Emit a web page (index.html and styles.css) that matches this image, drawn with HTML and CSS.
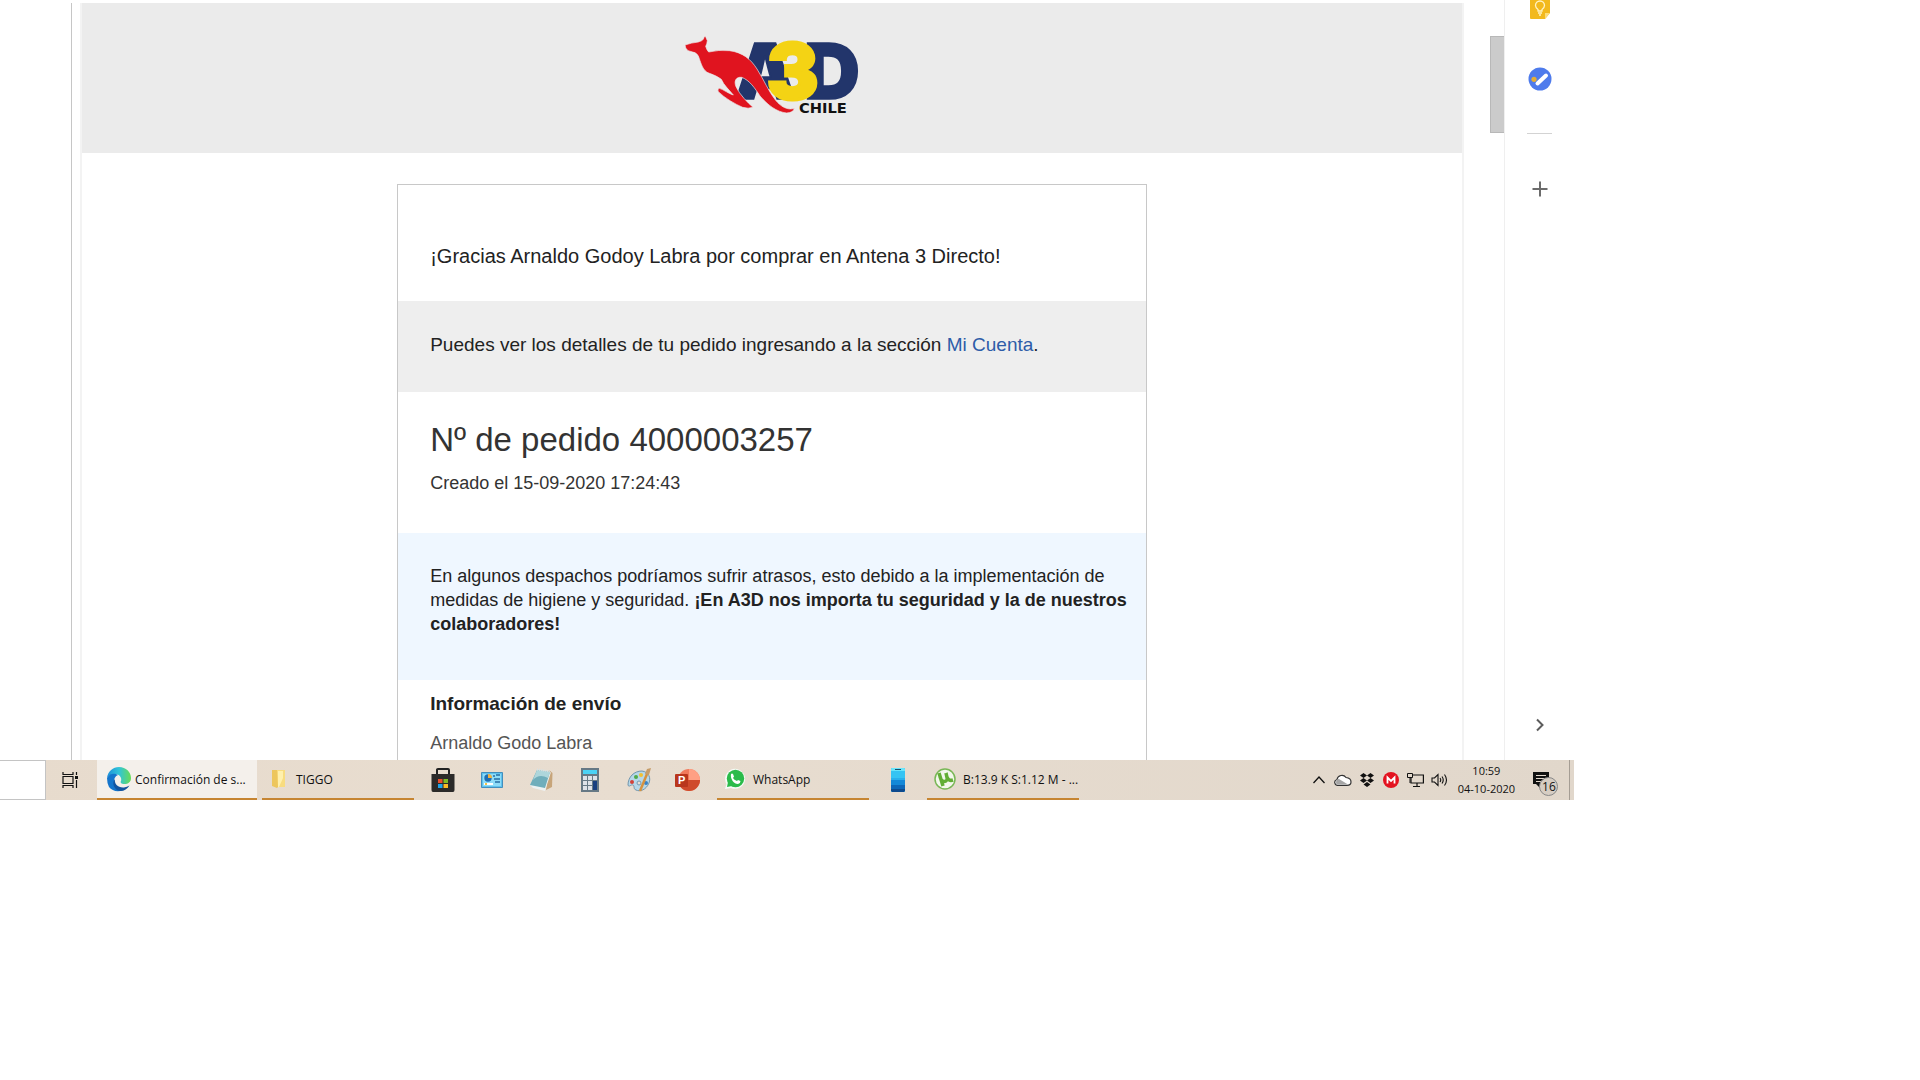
FILE: index.html
```
<!DOCTYPE html>
<html lang="es">
<head>
    <meta charset="UTF-8">
    <meta name="viewport" content="width=device-width, initial-scale=1.0">
    <title>Confirmación de su pedido</title>
    <link rel="stylesheet" href="styles.css">
</head>
<body>
    <div class="desktop">
        <div class="browser">
            <!-- Message -->
            <main class="message">
                <div class="email">
                    <header class="email-header">
                        <svg class="logo" viewBox="6 0 660 330" role="img" aria-label="A3D Chile">
                            <g class="logo-letters">
                                <text x="224" y="236">A</text>
                                <text x="432" y="236">D</text>
                                <text x="320" y="236" class="logo-three">3</text>
                            </g>
                            <path fill="#e0141f" stroke="#ececec" stroke-width="2" d="M75 75Q95 68 115 66Q126 63 130 58Q131 52 136 48L142 62Q141 72 137 79Q140 90 146 96Q175 89 208 92C248 97 272 117 291 147C312 180 326 215 347 241C362 259 382 272 403 265Q400 278 380 279C350 276 323 255 300 228C285 205 268 180 245 172C228 170 221 183 228 200C240 226 262 246 279 262Q265 267 248 262C225 252 195 235 175 215Q171 208 178 205C190 208 207 222 220 225C205 207 192 196 184 178C166 165 152 162 141 157C125 145 122 125 115 108Q109 97 98 96L84 92Q75 85 75 75Z"/>
                            <text x="417" y="280" class="logo-country">CHILE</text>
                        </svg>
                    </header>
                    <div class="card">
                        <section class="thanks">
                            <p>¡Gracias Arnaldo Godoy Labra por comprar en Antena 3 Directo!</p>
                        </section>
                        <section class="account">
                            <p>Puedes ver los detalles de tu pedido ingresando a la sección <a href="#">Mi Cuenta</a>.</p>
                        </section>
                        <section class="order">
                            <h1>Nº de pedido 4000003257</h1>
                            <p>Creado el 15-09-2020 17:24:43</p>
                        </section>
                        <section class="notice">
                            <p>En algunos despachos podríamos sufrir atrasos, esto debido a la implementación de medidas de higiene y seguridad. <strong>¡En A3D nos importa tu seguridad y la de nuestros colaboradores!</strong></p>
                        </section>
                        <section class="shipping">
                            <h2>Información de envío</h2>
                            <p>Arnaldo Godo Labra</p>
                        </section>
                    </div>
                </div>
            </main>
            <div class="scrollbar"><div class="thumb"></div></div>

            <!-- Side panel -->
            <aside class="side-panel">
                <button class="keep" aria-label="Keep">
                    <svg width="22" height="19" viewBox="0 0 22 19">
                        <path fill="#f2b91d" d="M1 0H21V13L16 19H2Q1 19 1 18Z"/>
                        <path fill="#fbdc7a" d="M21 13H16V19Z"/>
                        <path fill="none" stroke="#fff3c4" stroke-width="1.3" d="M9 11V9.500Q6.500 7.500 6.500 5.500A4.500 4.500 0 0 1 15.500 5.500Q15.500 7.500 13 9.500V11ZM9 13H13M10 15H12"/>
                    </svg>
                </button>
                <button class="tasks" aria-label="Tasks">
                    <svg width="24" height="24" viewBox="0 0 24 24">
                        <circle cx="12" cy="12" r="11.500" fill="#4e7bec"/>
                        <circle cx="6" cy="12.300" r="2.600" fill="#e5ae36"/>
                        <path stroke="#fff" stroke-width="4" stroke-linecap="round" d="M9.500 16.500L18 8.500"/>
                    </svg>
                </button>
                <hr>
                <button class="add" aria-label="Obtener complementos">
                    <svg width="16" height="16" viewBox="0 0 16 16"><path stroke="#6b6b6b" stroke-width="2" d="M8 .500V15.500M.500 8H15.500"/></svg>
                </button>
                <button class="collapse" aria-label="Ocultar panel">
                    <svg width="10" height="14" viewBox="0 0 10 14"><path fill="none" stroke="#5c5c5c" stroke-width="2" d="M2 1.500L7.500 7L2 12.500"/></svg>
                </button>
            </aside>
        </div>

        <!-- Taskbar -->
        <nav class="taskbar">
            <input class="search" type="text" aria-label="Buscar">
            <button class="task-view" aria-label="Vista de tareas">
                <svg width="18" height="18" viewBox="0 0 18 18" fill="none" stroke="#111" stroke-width="1.200">
                    <path d="M2 1V3.500H12V1M2 17V14.500H12V17M2 5.500H12V12.500H2ZM15.500 1V4M15.500 9V17"/>
                    <path fill="#111" stroke="none" d="M14 5H17V8H14Z"/>
                </svg>
            </button>
            <button class="app edge active">
                <svg width="26" height="26" viewBox="0 0 26 26">
                    <defs>
                        <linearGradient id="edgeTop" x1="0" x2="1"><stop offset="0" stop-color="#1c8fda"/><stop offset=".5" stop-color="#31c4d8"/><stop offset="1" stop-color="#68dc55"/></linearGradient>
                    </defs>
                    <path fill="url(#edgeTop)" d="M1 12C2 5 7 1 13 1C20 1 25 6 25 12C25 16 22 18 18.500 18C15 18 14 16.500 15 15C16 12 14 9 10 8C6 8 3 9 1 12Z"/>
                    <path fill="#1475cc" d="M1 12C3 8 8 6.500 12 9C9 10 8 13 8 15C8 20 12 24 17 24C12 26.500 6 25 3 21Q1 17 1 12Z"/>
                    <path fill="#1254a0" d="M9 13C8 18 12 22 18 21.500Q21 21 23.500 19.500C21 24 16 26 12 24.500C7 22 6 16 9 13Z"/>
                </svg>
                <span>Confirmación de s...</span>
            </button>
            <button class="app folder">
                <svg width="20" height="20" viewBox="0 0 20 20">
                    <path fill="#f8dc7f" d="M6 1H16V18H6Z"/>
                    <path fill="#edc65c" d="M3 1H8L9 18L8 19L3 17Z"/>
                    <path fill="#fff0ad" d="M9 2H14V9L10 18H9Z"/>
                </svg>
                <span>TIGGO</span>
            </button>
            <div class="pinned">
                <button aria-label="Microsoft Store">
                    <svg width="24" height="24" viewBox="0 0 24 24">
                        <path fill="none" stroke="#222" stroke-width="2" d="M6 7V1.500Q6 1 7 1H17Q18 1 18 2V7"/>
                        <path fill="#2b2a29" d="M.500 6H23.500V22Q23.500 24 22 24H2Q.500 24 .500 22Z"/>
                        <path fill="#e94f2d" d="M7 11H11.500V15H7Z"/><path fill="#80bb24" d="M12.500 11H17V15H12.500Z"/>
                        <path fill="#20a5ea" d="M7 16H11.500V20H7Z"/><path fill="#fcba25" d="M12.500 16H17V20H12.500Z"/>
                    </svg>
                </button>
                <button aria-label="Panel de control">
                    <svg width="24" height="24" viewBox="0 0 24 24">
                        <path fill="#5fc2ee" stroke="#438fbd" d="M1.500 4.500H22.500V19.500H1.500Z"/>
                        <path fill="#8edcf8" d="M3 6H21V18H3Z"/>
                        <circle cx="8" cy="10" r="3.700" fill="#1e6db2"/><path fill="#f2b343" d="M8 10V6A4 4 0 0 1 12 10Z"/>
                        <path stroke="#266da4" stroke-width="1.500" d="M13 8H15M16 7H20M14 11H20M15 14H20"/>
                        <path stroke="#fff" stroke-width="2" d="M4 16H13"/><path stroke="#f0c246" stroke-width="2" d="M5 16H7"/>
                    </svg>
                </button>
                <button aria-label="Bloc de notas">
                    <svg width="24" height="24" viewBox="0 0 24 24">
                        <path fill="#c7a57a" d="M20 2L23.500 5L23 19L17 22Z"/>
                        <path fill="#edf2f2" d="M1 17L4 20L16 23L22 4Z"/>
                        <path fill="#70aebb" d="M8 2L21 4L16 20L1 17Z"/>
                        <path fill="#aed6db" d="M8 2L21 4L19 10Q10 5 4 12Z"/>
                        <path stroke="#d5e2e5" stroke-width="2" stroke-dasharray="1 1" d="M8 1.500L21 3.500"/>
                    </svg>
                </button>
                <button aria-label="Calculadora">
                    <svg width="24" height="24" viewBox="0 0 24 24">
                        <path fill="#667985" d="M3 0H21V24H3Z"/><path fill="#4bd2f5" d="M5 2H19V6H5Z"/>
                        <path fill="#dde2e8" d="M5 8H9V12H5ZM10 8H14V12H10ZM15 8H19V12H15ZM5 13H9V17H5ZM10 13H14V17H10ZM5 18H9V22H5ZM10 18H14V22H10Z"/>
                        <path fill="#173f80" d="M15 13H19V22H15Z"/>
                    </svg>
                </button>
                <button aria-label="Paint">
                    <svg width="24" height="24" viewBox="0 0 24 24">
                        <path fill="#b6d8e9" stroke="#7196ad" d="M1 17C1 9 7 3 15 3C22 4 24 10 22 15C19 22 13 24 9 22C6 21 8 18 6 17C4 16 2 20 1 17Z"/>
                        <circle cx="12" cy="15" r="2" fill="#e9dfd3" stroke="#7299b2"/>
                        <circle cx="5" cy="14" r="2" fill="#d34238"/><circle cx="9" cy="9" r="2" fill="#4fab4a"/><circle cx="14" cy="7" r="2" fill="#f1c132"/><circle cx="19" cy="15" r="2" fill="#3982c5"/>
                        <path stroke="#d6923e" stroke-width="2.500" d="M13 23L20 6"/><path fill="#c69d69" d="M18 6L20 1L24 0L22 7Z"/>
                    </svg>
                </button>
                <button aria-label="PowerPoint">
                    <svg width="26" height="24" viewBox="0 0 26 24">
                        <circle cx="14" cy="12" r="11" fill="#f07a5b"/><path fill="#ffa084" d="M14 1A11 11 0 0 1 25 12H14Z"/><path fill="#cf4a2b" d="M3 12H25A11 11 0 0 1 3 12Z"/>
                        <rect y="6" width="13" height="13" rx="1" fill="#b9361c"/>
                        <text x="3" y="16" class="ppt-letter">P</text>
                    </svg>
                </button>
            </div>
            <button class="app whatsapp">
                <svg width="22" height="22" viewBox="0 0 22 22">
                    <path fill="#f7fbf7" d="M1 21L2.500 16A10 10 0 1 1 7 20Z"/>
                    <circle cx="11.500" cy="10.500" r="8.700" fill="#2bbb4a"/><path fill="#2bbb4a" d="M3 19L4 14L8 18Z"/>
                    <path fill="#fff" d="M7 6Q8 5 9 6L10 8.500L9 10Q10 12 13 13L14 12L16.500 13Q16.500 15.500 14 16C10 16 6 11 7 6Z"/>
                </svg>
                <span>WhatsApp</span>
            </button>
            <button class="phone" aria-label="Tu Teléfono">
                <svg width="14" height="24" viewBox="0 0 14 24">
                    <rect width="14" height="24" rx="1" fill="#35c4f3"/>
                    <path fill="#28b0ed" d="M0 10H14V17H0Z"/><path fill="#1488d8" d="M0 12H14V18H0Z"/><path fill="#0d66b8" d="M0 17H14V21H0Z"/><path fill="#0d4a8e" d="M0 21H14V23L13 24H1L0 23Z"/>
                    <path fill="#68e5fb" d="M0 1L1 0H13L14 1V3H0Z"/><path stroke="#14506e" d="M4 1.500H10"/>
                </svg>
            </button>
            <button class="app torrent">
                <svg width="22" height="22" viewBox="0 0 22 22">
                    <circle cx="11" cy="11" r="10" fill="#f3f7ec" stroke="#79b756" stroke-width="1.500"/>
                    <path fill="none" stroke="#62ae35" stroke-width="3.500" d="M5 5L9 18M6 9Q8 15 12 13Q14 12 12 5M12 5Q13 14 19 12"/>
                </svg>
                <span>B:13.9 K S:1.12 M - ...</span>
            </button>
            <div class="tray">
                <button aria-label="Iconos ocultos"><svg width="14" height="10" viewBox="0 0 14 10"><path fill="none" stroke="#111" stroke-width="1.300" d="M1.500 8L7 2L12.500 8"/></svg></button>
                <button aria-label="OneDrive"><svg width="18" height="12" viewBox="0 0 18 12"><path fill="#fff" stroke="#333" stroke-width="1.200" d="M4 11.400A3 3 0 0 1 3 5.500A5 5 0 0 1 12 3.500Q17 4 17 8Q17 11.400 13 11.400Z"/><path fill="#a5a5a5" d="M2 9Q2 5 5 5L14 10.600H4Q2 10 2 9Z"/></svg></button>
                <button aria-label="Dropbox"><svg width="16" height="15" viewBox="0 0 16 15"><path fill="#111" d="M4.500 0L8 2.500L4.500 5L1 2.500ZM11.500 0L15 2.500L11.500 5L8 2.500ZM4.500 5L8 7.500L4.500 10L1 7.500ZM11.500 5L15 7.500L11.500 10L8 7.500ZM8 9L11.500 11.500L8 14L4.500 11.500Z"/></svg></button>
                <button aria-label="MEGA"><svg width="16" height="16" viewBox="0 0 16 16"><circle cx="8" cy="8" r="8" fill="#e31320"/><path fill="none" stroke="#fff" stroke-width="1.800" d="M4.500 11.500V5.500L8 9L11.500 5.500V11.500"/></svg></button>
                <button aria-label="Red"><svg width="17" height="16" viewBox="0 0 17 16"><path fill="none" stroke="#111" stroke-width="1.200" d="M6 3H16.400V11H4V6M10 11V14.500M6 14.500H13"/><path fill="none" stroke="#111" d="M.500 1.500H5.500V5.500H.500ZM3 5.500V11"/></svg></button>
                <button aria-label="Volumen"><svg width="17" height="16" viewBox="0 0 17 16"><path fill="none" stroke="#111" stroke-width="1.100" d="M1 6H3.500L7 2.500V13.500L3.500 10H1ZM9 6Q10.500 8 9 10M11 4.500Q13.500 8 11 11.500M13.500 2.500Q17.500 8 13.500 13.500"/></svg></button>
                <time class="clock" datetime="2020-10-04T10:59">10:59<br>04-10-2020</time>
                <button class="notifications" aria-label="16 notificaciones">
                    <svg width="16" height="17" viewBox="0 0 16 17"><path fill="#111" d="M0 0H16V12H7V16L3 12H0Z"/><path stroke="#e3d8cc" d="M3 3.500H13M3 6.500H13M3 9.500H9"/></svg>
                    <span class="badge">16</span>
                </button>
                <button class="show-desktop" aria-label="Mostrar escritorio"></button>
            </div>
        </nav>
    </div>
</body>
</html>
```

FILE: styles.css
```
* {
    box-sizing: border-box;
}

body {
    font-family: "Liberation Sans", Arial, sans-serif;
    margin: 0;
    background-color: #fff;
}

h1, h2, p {
    margin: 0;
}

button {
    display: flex;
    align-items: center;
    justify-content: center;
    padding: 0;
    border: none;
    background: none;
    color: #111;
    font-family: "Open Sans", sans-serif;
    font-size: 12px;
    cursor: pointer;
}

svg {
    display: block;
    flex-shrink: 0;
}

.desktop {
    width: 82%;
}

.browser {
    display: flex;
}

/* Message */
.message {
    flex: 1;
    margin: 3px 0 0 71px;
    padding: 0 26px 0 8px;
    border-left: 1px solid #c6c6c6;
}

.email {
    height: 100%;
    border: solid #f3f3f3;
    border-width: 0 2px;
}

.email-header {
    padding: 17px 0 23px;
    background-color: #ebebeb;
}

.logo {
    width: 220px;
    height: 110px;
    margin: 0 auto;
}

.logo-letters {
    font-family: Inter, sans-serif;
    font-size: 232px;
    font-weight: 900;
    fill: #22356b;
    stroke: #22356b;
    stroke-width: 5px;
}

.logo-three {
    fill: #f4d314;
    stroke: #f4d314;
    stroke-width: 9px;
}

.logo-country {
    font-family: "DejaVu Sans", sans-serif;
    font-size: 44px;
    font-weight: bold;
    fill: #111;
}

.card {
    max-width: 750px;
    margin: 31px auto 0;
    border: 1px solid #c8c8c8;
    border-bottom: none;
    color: #222;
}

.card section {
    padding: 32px;
}

.card .thanks {
    padding: 57px 32px 31px;
    font-size: 20px;
    line-height: 28px;
}

.card .account {
    padding: 30px 32px 34px;
    font-size: 19px;
    line-height: 27px;
    background-color: #eee;
}

.account a {
    color: #2d5ca8;
    text-decoration: none;
}

.card .order {
    padding: 24px 32px 34px;
    font-size: 18px;
    line-height: 32px;
    color: #333;
}

.order h1 {
    padding-bottom: 3px;
    font-size: 33px;
    font-weight: normal;
    line-height: 48px;
}

/* less room on the right so the second line holds "nuestros" */
.card .notice {
    padding: 31px 16px 44px 32px;
    font-size: 18px;
    line-height: 24px;
    background-color: #eff7ff;
}

.card .shipping {
    padding: 8px 32px 1px;
    font-size: 18px;
    line-height: 32px;
    color: #555;
}

.shipping h2 {
    padding-bottom: 7px;
    font-size: 19px;
    color: #222;
}

.scrollbar {
    width: 14px;
    padding-top: 36px;
}

.thumb {
    height: 97px;
    background-color: #cbcbcb;
    border: 1px solid #b8b8b8;
    border-right: none;
}

/* Side panel */
.side-panel {
    display: flex;
    flex-direction: column;
    align-items: center;
    width: 70px;
    padding: 0 0 28px;
    border-left: 1px solid #efefef;
}

.tasks {
    margin-top: 48px;
}

.side-panel hr {
    width: 25px;
    margin: 42px 0 47px;
    border: none;
    border-top: 1px solid #d3d3d3;
}

.collapse {
    margin-top: auto;
}

/* Taskbar */
.taskbar {
    display: flex;
    height: 40px;
    background: linear-gradient(90deg, #e7dbcd, #e8ddd0 40%, #e1d7cb);
}

.search {
    width: 46px;
    border: 1px solid #c4c4c4;
    border-left: none;
    background-color: #fff;
}

.task-view {
    width: 51px;
    padding-right: 4px;
}

.app {
    width: 152px;
    margin-right: 4px;
    padding: 0 7px;
    gap: 7px;
    justify-content: flex-start;
    border-bottom: 2px solid #c68532;
    white-space: nowrap;
}

.active {
    width: 160px;
    margin-right: 5px;
    padding: 0 9px;
    gap: 3px;
    background-color: #f4f0eb;
}

.pinned {
    display: flex;
    margin-right: 5px;
}

.pinned button {
    width: 49px;
}

.ppt-letter {
    font-family: "Liberation Sans", sans-serif;
    font-size: 11px;
    font-weight: bold;
    fill: #fff;
}

.whatsapp {
    margin-right: 0;
}

.phone {
    width: 58px;
}

.tray {
    display: flex;
    margin-left: auto;
}

.tray button {
    width: 24px;
}

.clock {
    width: 70px;
    padding-top: 2px;
    font-family: "Open Sans", sans-serif;
    font-size: 11px;
    line-height: 18px;
    text-align: center;
    color: #111;
}

.tray .notifications {
    position: relative;
    width: 48px;
    padding-right: 8px;
}

.badge {
    position: absolute;
    right: 11px;
    bottom: 4px;
    width: 19px;
    border: 1px solid #888;
    border-radius: 10px;
    background-color: #d6cdc3;
    font-size: 12px;
    line-height: 17px;
}

.tray .show-desktop {
    width: 5px;
    border-left: 1px solid #a59d94;
}
```
